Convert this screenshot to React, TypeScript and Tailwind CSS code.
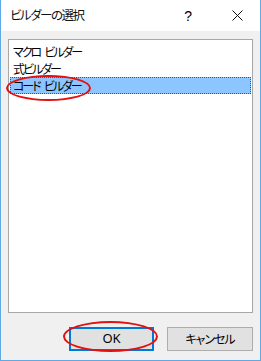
import React from 'react';

const items = ['マクロ ビルダー', '式ビルダー', 'コード ビルダー'];

export default function App() {
  const selected = 2;
  return (
    <div
      className="relative w-[261px] h-[361px] flex flex-col bg-[#f0f0f0] border border-t-0 border-[#5ea9e6] text-black text-[12px] [font-feature-settings:'palt']"
      style={{ fontFamily: '"Noto Sans CJK JP", "Noto Sans", sans-serif' }}
    >
      {/* title bar */}
      <div className="h-[31px] bg-white flex items-center pl-[9px]">
        <span className="text-[12.5px] text-[#111] tracking-[-1.5px]">ビルダーの選択</span>
        <span className="ml-auto mr-[40px] text-[14px] leading-none" style={{ fontFamily: '"Liberation Sans", sans-serif' }}>?</span>
        <svg width="11" height="11" viewBox="0 0 11 11" className="mr-[17px]">
          <path d="M0.5 0.5 L10.5 10.5 M10.5 0.5 L0.5 10.5" stroke="#111" strokeWidth="1" />
        </svg>
      </div>

      {/* body */}
      <div className="flex-1 flex flex-col px-[7px] pt-[8px] pb-[9px]">
        <div className="h-[274px] bg-white border border-[#a8a8a8] pt-[3px] px-[1px]">
          {items.map((it, i) => {
            const [a, b] = it.split(' ');
            return (
              <div
                key={it}
                className={
                  i === selected
                    ? 'h-[17px] flex items-center pl-[2px] bg-[#8cc5ff] border border-dotted border-[#7a4a10]'
                    : 'h-[17px] flex items-center pl-[3px]'
                }
              >
                <span className="leading-none tracking-[-2px]">{a}</span>
                {b && <span className="leading-none tracking-[-2px] ml-[4px]">{b}</span>}
              </div>
            );
          })}
        </div>

        <div className="mt-[14px] flex justify-end gap-[13px]">
          <button className="w-[85px] h-[24px] bg-[#e1e1e1] border-2 border-[#0078d7] flex items-center justify-center text-[13px]" style={{ fontFamily: '"Noto Sans", sans-serif' }}>
            OK
          </button>
          <button className="w-[86px] h-[24px] bg-[#e1e1e1] border border-[#adadad] flex items-center justify-center text-[12px] tracking-[-1px]">
            キャンセル
          </button>
        </div>
      </div>

      {/* red annotation ellipses */}
      <div className="absolute left-[5px] top-[75px] w-[85px] h-[26px] rounded-[50%] border-2 border-[#e41010]" />
      <div className="absolute left-[62px] top-[321px] w-[95px] h-[31px] rounded-[50%] border-2 border-[#e41010]" />
    </div>
  );
}
